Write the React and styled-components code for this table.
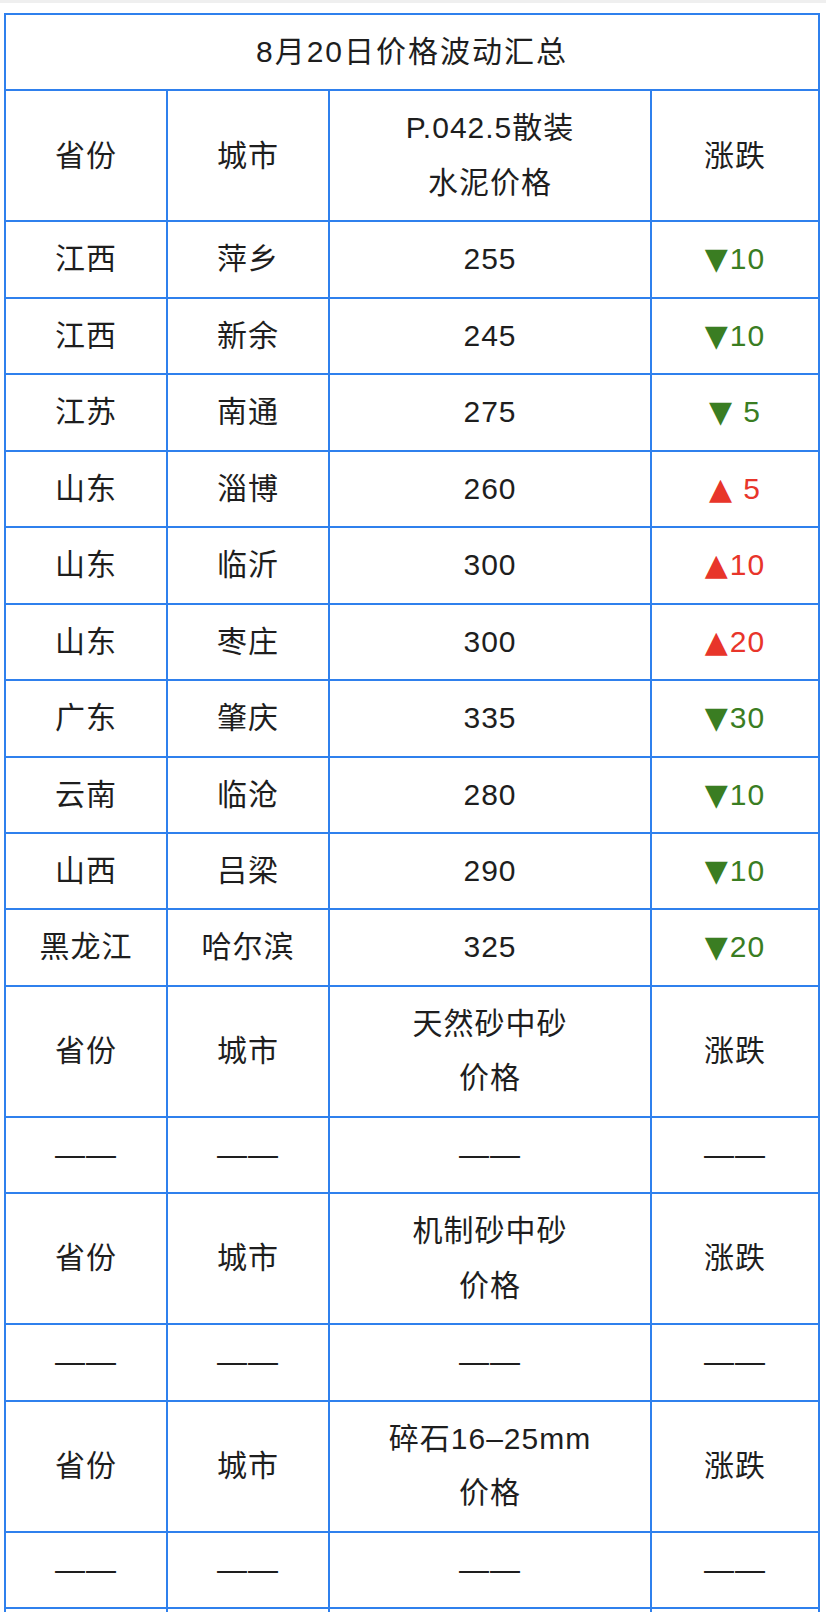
import React from "react";
import styled, { createGlobalStyle } from "styled-components";

const GlobalStyle = createGlobalStyle`
  html, body {
    margin: 0;
    padding: 0;
    background: #fff;
  }
  body {
    font-family: "Liberation Sans", "Noto Sans CJK SC", sans-serif;
    color: #222;
  }
`;

const cityRows = [
  ["江西", "萍乡", "255", "down", "10"],
  ["江西", "新余", "245", "down", "10"],
  ["江苏", "南通", "275", "down", " 5"],
  ["山东", "淄博", "260", "up", " 5"],
  ["山东", "临沂", "300", "up", "10"],
  ["山东", "枣庄", "300", "up", "20"],
  ["广东", "肇庆", "335", "down", "30"],
  ["云南", "临沧", "280", "down", "10"],
  ["山西", "吕梁", "290", "down", "10"],
  ["黑龙江", "哈尔滨", "325", "down", "20"],
];

// 下面三组暂无数据
const sections = [
  ["天然砂中砂", "价格"],
  ["机制砂中砂", "价格"],
  ["碎石16–25mm", "价格"],
];

const HeaderRow = ({ lines }) => (
  <tr>
    <Cell>省份</Cell>
    <Cell>城市</Cell>
    <Cell>
      {lines[0]}
      <br />
      {lines[1]}
    </Cell>
    <Cell>涨跌</Cell>
  </tr>
);

const EmptyRow = () => (
  <tr>
    <Cell>——</Cell>
    <Cell>——</Cell>
    <Cell>——</Cell>
    <Cell>——</Cell>
  </tr>
);

const App = () => {
  return (
    <>
      <GlobalStyle />
      <TopBar />
      <Page>
        <Table>
          <colgroup>
            <col style={{ width: 162 }} />
            <col style={{ width: 162 }} />
            <col style={{ width: 322 }} />
            <col style={{ width: 168 }} />
          </colgroup>
          <tbody>
            <tr>
              <TitleCell colSpan={4}>8月20日价格波动汇总</TitleCell>
            </tr>
            <HeaderRow lines={["P.042.5散装", "水泥价格"]} />
            {cityRows.map(([prov, city, price, dir, change], i) => (
              <tr key={i}>
                <Cell>{prov}</Cell>
                <Cell>{city}</Cell>
                <Cell>{price}</Cell>
                <Cell>
                  <Change $up={dir === "up"}>
                    <Arrow>{dir === "up" ? "▲" : "▼"}</Arrow>
                    {change}
                  </Change>
                </Cell>
              </tr>
            ))}
            {sections.map((lines, i) => (
              <React.Fragment key={i}>
                <HeaderRow lines={lines} />
                <EmptyRow />
              </React.Fragment>
            ))}
            <tr>
              <Cell>&nbsp;</Cell>
              <Cell>&nbsp;</Cell>
              <Cell>&nbsp;</Cell>
              <Cell>&nbsp;</Cell>
            </tr>
          </tbody>
        </Table>
      </Page>
    </>
  );
};

const TopBar = styled.div`
  height: 3px;
  background: #efefef;
`;

const Page = styled.div`
  padding: 10px 6px 0 4px;
`;

const Table = styled.table`
  width: 816px;
  border-collapse: collapse;
  table-layout: fixed;
`;

const Cell = styled.td`
  border: 2px solid #2f80ed;
  padding: 10px 4px;
  text-align: center;
  vertical-align: middle;
  font-size: 30px;
  line-height: 54.45px;
  letter-spacing: 1px;
  color: #1e1e1e;
  white-space: pre;
`;

const TitleCell = styled(Cell)`
  letter-spacing: 2px;
`;

const Change = styled.span`
  color: ${(props) => (props.$up ? "#e8352a" : "#3a7d22")};
`;

const Arrow = styled.span`
  font-family: "DejaVu Sans", sans-serif;
  font-size: 30px;
  letter-spacing: 0;
  margin-right: 2px;
`;

export default App;
